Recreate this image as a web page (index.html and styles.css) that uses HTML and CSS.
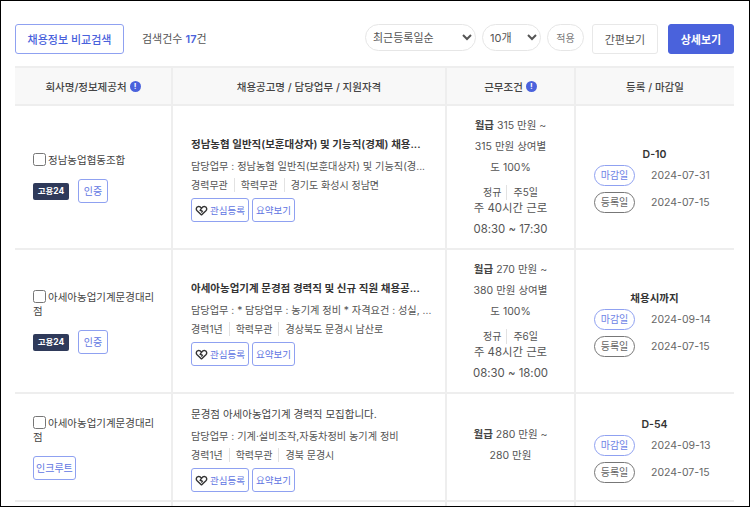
FILE: index.html
```html
<!DOCTYPE html>
<html lang="ko">
<head>
<meta charset="utf-8">
<title>채용정보</title>
<link rel="stylesheet" href="styles.css">
</head>
<body>
<div class="frame">
  <div class="toolbar">
    <button class="compare">채용정보 비교검색</button>
    <span class="count">검색건수 <b>17</b>건</span>
    <div class="controls">
      <select class="sel sel-sort"><option>최근등록일순</option></select>
      <select class="sel sel-num"><option>10개</option></select>
      <button class="apply">적용</button>
      <button class="view">간편보기</button>
      <button class="view active">상세보기</button>
    </div>
  </div>

  <div class="row head">
    <div class="cell">회사명/정보제공처 <i class="info">!</i></div>
    <div class="cell">채용공고명 / 담당업무 / 지원자격</div>
    <div class="cell">근무조건 <i class="info">!</i></div>
    <div class="cell">등록 / 마감일</div>
  </div>

  <div class="row r1">
    <div class="cell company">
      <label class="name"><input type="checkbox">정남농업협동조합</label>
      <div class="tags"><span class="badge">고용24</span><span class="tag">인증</span></div>
    </div>
    <div class="cell job">
      <div class="title strong">정남농협 일반직(보훈대상자) 및 기능직(경제) 채용...</div>
      <div class="duty">담당업무 : 정남농협 일반직(보훈대상자) 및 기능직(경...</div>
      <div class="meta"><span>경력무관</span><span>학력무관</span><span>경기도 화성시 정남면</span></div>
      <div class="actions">
        <a class="act"><svg class="heart" viewBox="0 0 16 14"><path d="M8 12.6 2.4 7.4C.6 5.6 1.2 2.6 3.600 2c1.800-.4 3.200.4 4.400 2.200L6.400 6.600 9 8l-1.200 1.600M8 4.200C9.200 2.400 10.600 1.600 12.400 2c2.400.6 3 3.600 1.200 5.400L8 12.600"/></svg>관심등록</a>
        <a class="act">요약보기</a>
      </div>
    </div>
    <div class="cell cond">
      <p><b>월급</b> 315 만원 ~<br>315 만원 상여별<br>도 100%</p>
      <div class="kind"><span>정규</span><span>주5일</span></div>
      <p class="hours">주 40시간 근로<br>08:30 ~ 17:30</p>
    </div>
    <div class="cell dates">
      <div class="dday">D-10</div>
      <div class="date"><span class="pill end">마감일</span>2024-07-31</div>
      <div class="date"><span class="pill reg">등록일</span>2024-07-15</div>
    </div>
  </div>

  <div class="row r2">
    <div class="cell company">
      <label class="name"><input type="checkbox">아세아농업기계문경대리점</label>
      <div class="tags"><span class="badge">고용24</span><span class="tag">인증</span></div>
    </div>
    <div class="cell job">
      <div class="title strong">아세아농업기계 문경점 경력직 및 신규 직원 채용공...</div>
      <div class="duty">담당업무 : * 담당업무 : 농기계 정비 * 자격요건 : 성실, ...</div>
      <div class="meta"><span>경력1년</span><span>학력무관</span><span>경상북도 문경시 남산로</span></div>
      <div class="actions">
        <a class="act"><svg class="heart" viewBox="0 0 16 14"><path d="M8 12.6 2.4 7.4C.6 5.6 1.2 2.6 3.600 2c1.800-.4 3.200.4 4.400 2.200L6.400 6.600 9 8l-1.200 1.600M8 4.200C9.200 2.400 10.600 1.600 12.400 2c2.400.6 3 3.600 1.200 5.400L8 12.600"/></svg>관심등록</a>
        <a class="act">요약보기</a>
      </div>
    </div>
    <div class="cell cond">
      <p><b>월급</b> 270 만원 ~<br>380 만원 상여별<br>도 100%</p>
      <div class="kind"><span>정규</span><span>주6일</span></div>
      <p class="hours">주 48시간 근로<br>08:30 ~ 18:00</p>
    </div>
    <div class="cell dates">
      <div class="dday small">채용시까지</div>
      <div class="date"><span class="pill end">마감일</span>2024-09-14</div>
      <div class="date"><span class="pill reg">등록일</span>2024-07-15</div>
    </div>
  </div>

  <div class="row r3">
    <div class="cell company">
      <label class="name"><input type="checkbox">아세아농업기계문경대리점</label>
      <div class="tags"><span class="tag">인크루트</span></div>
    </div>
    <div class="cell job">
      <div class="title">문경점 아세아농업기계 경력직 모집합니다.</div>
      <div class="duty">담당업무 : 기계·설비조작,자동차정비 농기계 정비</div>
      <div class="meta"><span>경력1년</span><span>학력무관</span><span>경북 문경시</span></div>
      <div class="actions">
        <a class="act"><svg class="heart" viewBox="0 0 16 14"><path d="M8 12.6 2.4 7.4C.6 5.6 1.2 2.6 3.600 2c1.800-.4 3.200.4 4.400 2.200L6.400 6.600 9 8l-1.200 1.600M8 4.200C9.200 2.400 10.600 1.600 12.400 2c2.400.6 3 3.600 1.200 5.400L8 12.600"/></svg>관심등록</a>
        <a class="act">요약보기</a>
      </div>
    </div>
    <div class="cell cond short">
      <p><b>월급</b> 280 만원 ~<br>280 만원</p>
    </div>
    <div class="cell dates">
      <div class="dday">D-54</div>
      <div class="date"><span class="pill end">마감일</span>2024-09-13</div>
      <div class="date"><span class="pill reg">등록일</span>2024-07-15</div>
    </div>
  </div>
  <div class="row tail">
    <div class="cell"></div><div class="cell"></div><div class="cell"></div><div class="cell"></div>
  </div>
</div>
</body>
</html>
```
FILE: styles.css
```css
* { box-sizing: border-box; }
html, body { margin: 0; padding: 0; background: #fff; }
body {
  font-family: Inter, "Noto Sans CJK KR", "Noto Sans", sans-serif;
  font-size: 11px;
  color: #444;
}
.frame {
  width: 750px;
  height: 507px;
  border: 1px solid #000;
  overflow: hidden;
  padding: 23px 15px 0 14px;
}
button { font-family: inherit; cursor: pointer; }

.toolbar { display: flex; align-items: flex-start; height: 42px; }
.compare {
  width: 109px;
  height: 30px;
  padding: 0;
  background: #fff;
  border: 1px solid #8fa1f1;
  border-radius: 3px;
  color: #4a62dc;
  font-size: 11px;
  font-weight: 500;
}
.count { margin: 6px 0 0 18px; font-size: 11px; line-height: 18px; color: #555; }
.count b { font-weight: 600; color: #4a62dc; }
.controls { margin-left: auto; display: flex; align-items: flex-start; }
.sel {
  height: 27px;
  padding: 0 2px 0 3px;
  background: #fff;
  border: 1px solid #e6e6e6;
  border-radius: 14px;
  font-family: inherit;
  font-size: 11px;
  color: #555;
}
.sel-sort { width: 111px; }
.sel-num { width: 59px; margin-left: 6px; }
.apply {
  width: 37px;
  height: 27px;
  margin-left: 6px;
  padding: 0;
  background: #fff;
  border: 1px solid #e6e6e6;
  border-radius: 14px;
  color: #777;
  font-size: 10px;
}
.view {
  width: 66px;
  height: 30px;
  margin-left: 8px;
  padding: 0;
  background: #fff;
  border: 1px solid #e8e8e8;
  border-radius: 3px;
  color: #555;
  font-size: 11px;
}
.view.active {
  margin-left: 10px;
  background: #4a62dc;
  border-color: #4a62dc;
  color: #fff;
  font-weight: 700;
}

.row {
  display: grid;
  grid-template-columns: 158px 274px 129px 158px;
  border-bottom: 2px solid #eee;
}
.cell { border-right: 2px solid #eee; min-width: 0; }
.cell:last-child { border-right: 0; }

.head { height: 40px; background: #f8f8f8; border-top: 2px solid #eee; }
.head .cell {
  display: flex;
  align-items: center;
  justify-content: center;
  gap: 3px;
  font-weight: 500;
  font-size: 10.500px;
  color: #444;
}
.info {
  width: 11px;
  height: 11px;
  border-radius: 50%;
  background: #4a62dc;
  color: #fff;
  font-size: 8px;
  font-style: normal;
  font-weight: 700;
  line-height: 11px;
  text-align: center;
}

.r1, .r2 { height: 144px; }
.r3 { height: 108px; }
.tail { height: 10px; border-bottom: 0; }

.company {
  padding: 2px 10px 0 18px;
  display: flex;
  flex-direction: column;
  justify-content: center;
  gap: 11px;
}
.name { display: block; font-size: 10.500px; line-height: 14px; color: #444; }
.name input {
  width: 13px;
  height: 13px;
  margin: 0 2px 0 0;
  vertical-align: -2px;
}
.tags { display: flex; align-items: center; gap: 9px; }
.badge {
  width: 36px;
  height: 17px;
  background: #2f3a5a;
  border-radius: 2px;
  color: #fff;
  font-size: 8.500px;
  font-weight: 700;
  line-height: 17px;
  text-align: center;
}
.tag {
  min-width: 30px;
  padding: 0 2px;
  height: 24px;
  background: #fff;
  border: 1px solid #8fa1f1;
  border-radius: 3px;
  color: #5f76e2;
  font-size: 10px;
  line-height: 22px;
  text-align: center;
}

.job {
  padding: 4px 10px 0 18px;
  display: flex;
  flex-direction: column;
  justify-content: center;
}
.title, .duty { white-space: nowrap; }
.title { font-size: 10.500px; line-height: 18px; color: #444; }
.title.strong { font-weight: 600; color: #333; }
.duty { margin-top: 4px; font-size: 10.200px; line-height: 16px; color: #555; }
.meta { display: flex; margin-top: 4px; font-size: 10px; line-height: 14px; color: #555; }
.meta span + span { margin-left: 6px; padding-left: 6px; border-left: 1px solid #e2e2e2; }
.actions { display: flex; gap: 3px; margin-top: 6px; }
.act {
  display: flex;
  align-items: center;
  height: 24px;
  padding: 0 3px;
  background: #fff;
  border: 1px solid #8fa1f1;
  border-radius: 3px;
  color: #5f76e2;
  font-size: 9.500px;
}
.heart {
  width: 13px;
  height: 11px;
  margin: 0 2px 0 0;
  fill: none;
  stroke: #333;
  stroke-width: 1.800;
}

.cond {
  padding: 0 12px;
  display: flex;
  flex-direction: column;
  justify-content: center;
  text-align: center;
  font-size: 10.500px;
  color: #555;
}
.cond.short { padding-bottom: 4px; }
.cond p { margin: 0; line-height: 21px; }
.cond p.hours { font-size: 11.400px; }
.cond b { font-weight: 700; color: #444; }
.kind {
  display: flex;
  justify-content: center;
  margin: 7px 0 -2px;
  font-size: 10px;
  line-height: 15px;
}
.kind span + span { margin-left: 5px; padding-left: 6px; border-left: 1px solid #e2e2e2; }

.dates {
  padding: 6px 0 0 18px;
  display: flex;
  flex-direction: column;
  justify-content: center;
  gap: 6px;
  font-size: 10.500px;
  color: #666;
}
.dday {
  margin-bottom: -3px;
  padding-right: 19px;
  text-align: center;
  font-weight: 600;
  font-size: 10.500px;
  line-height: 14px;
  color: #333;
}
.date { display: flex; align-items: center; gap: 16px; }
.pill {
  width: 41px;
  height: 21px;
  border-radius: 11px;
  background: #fff;
  font-size: 10px;
  line-height: 19px;
  text-align: center;
}
.pill.end { border: 1px solid #8fa1f1; color: #6f84e6; }
.pill.reg { border: 1px solid #777; color: #666; }
```
